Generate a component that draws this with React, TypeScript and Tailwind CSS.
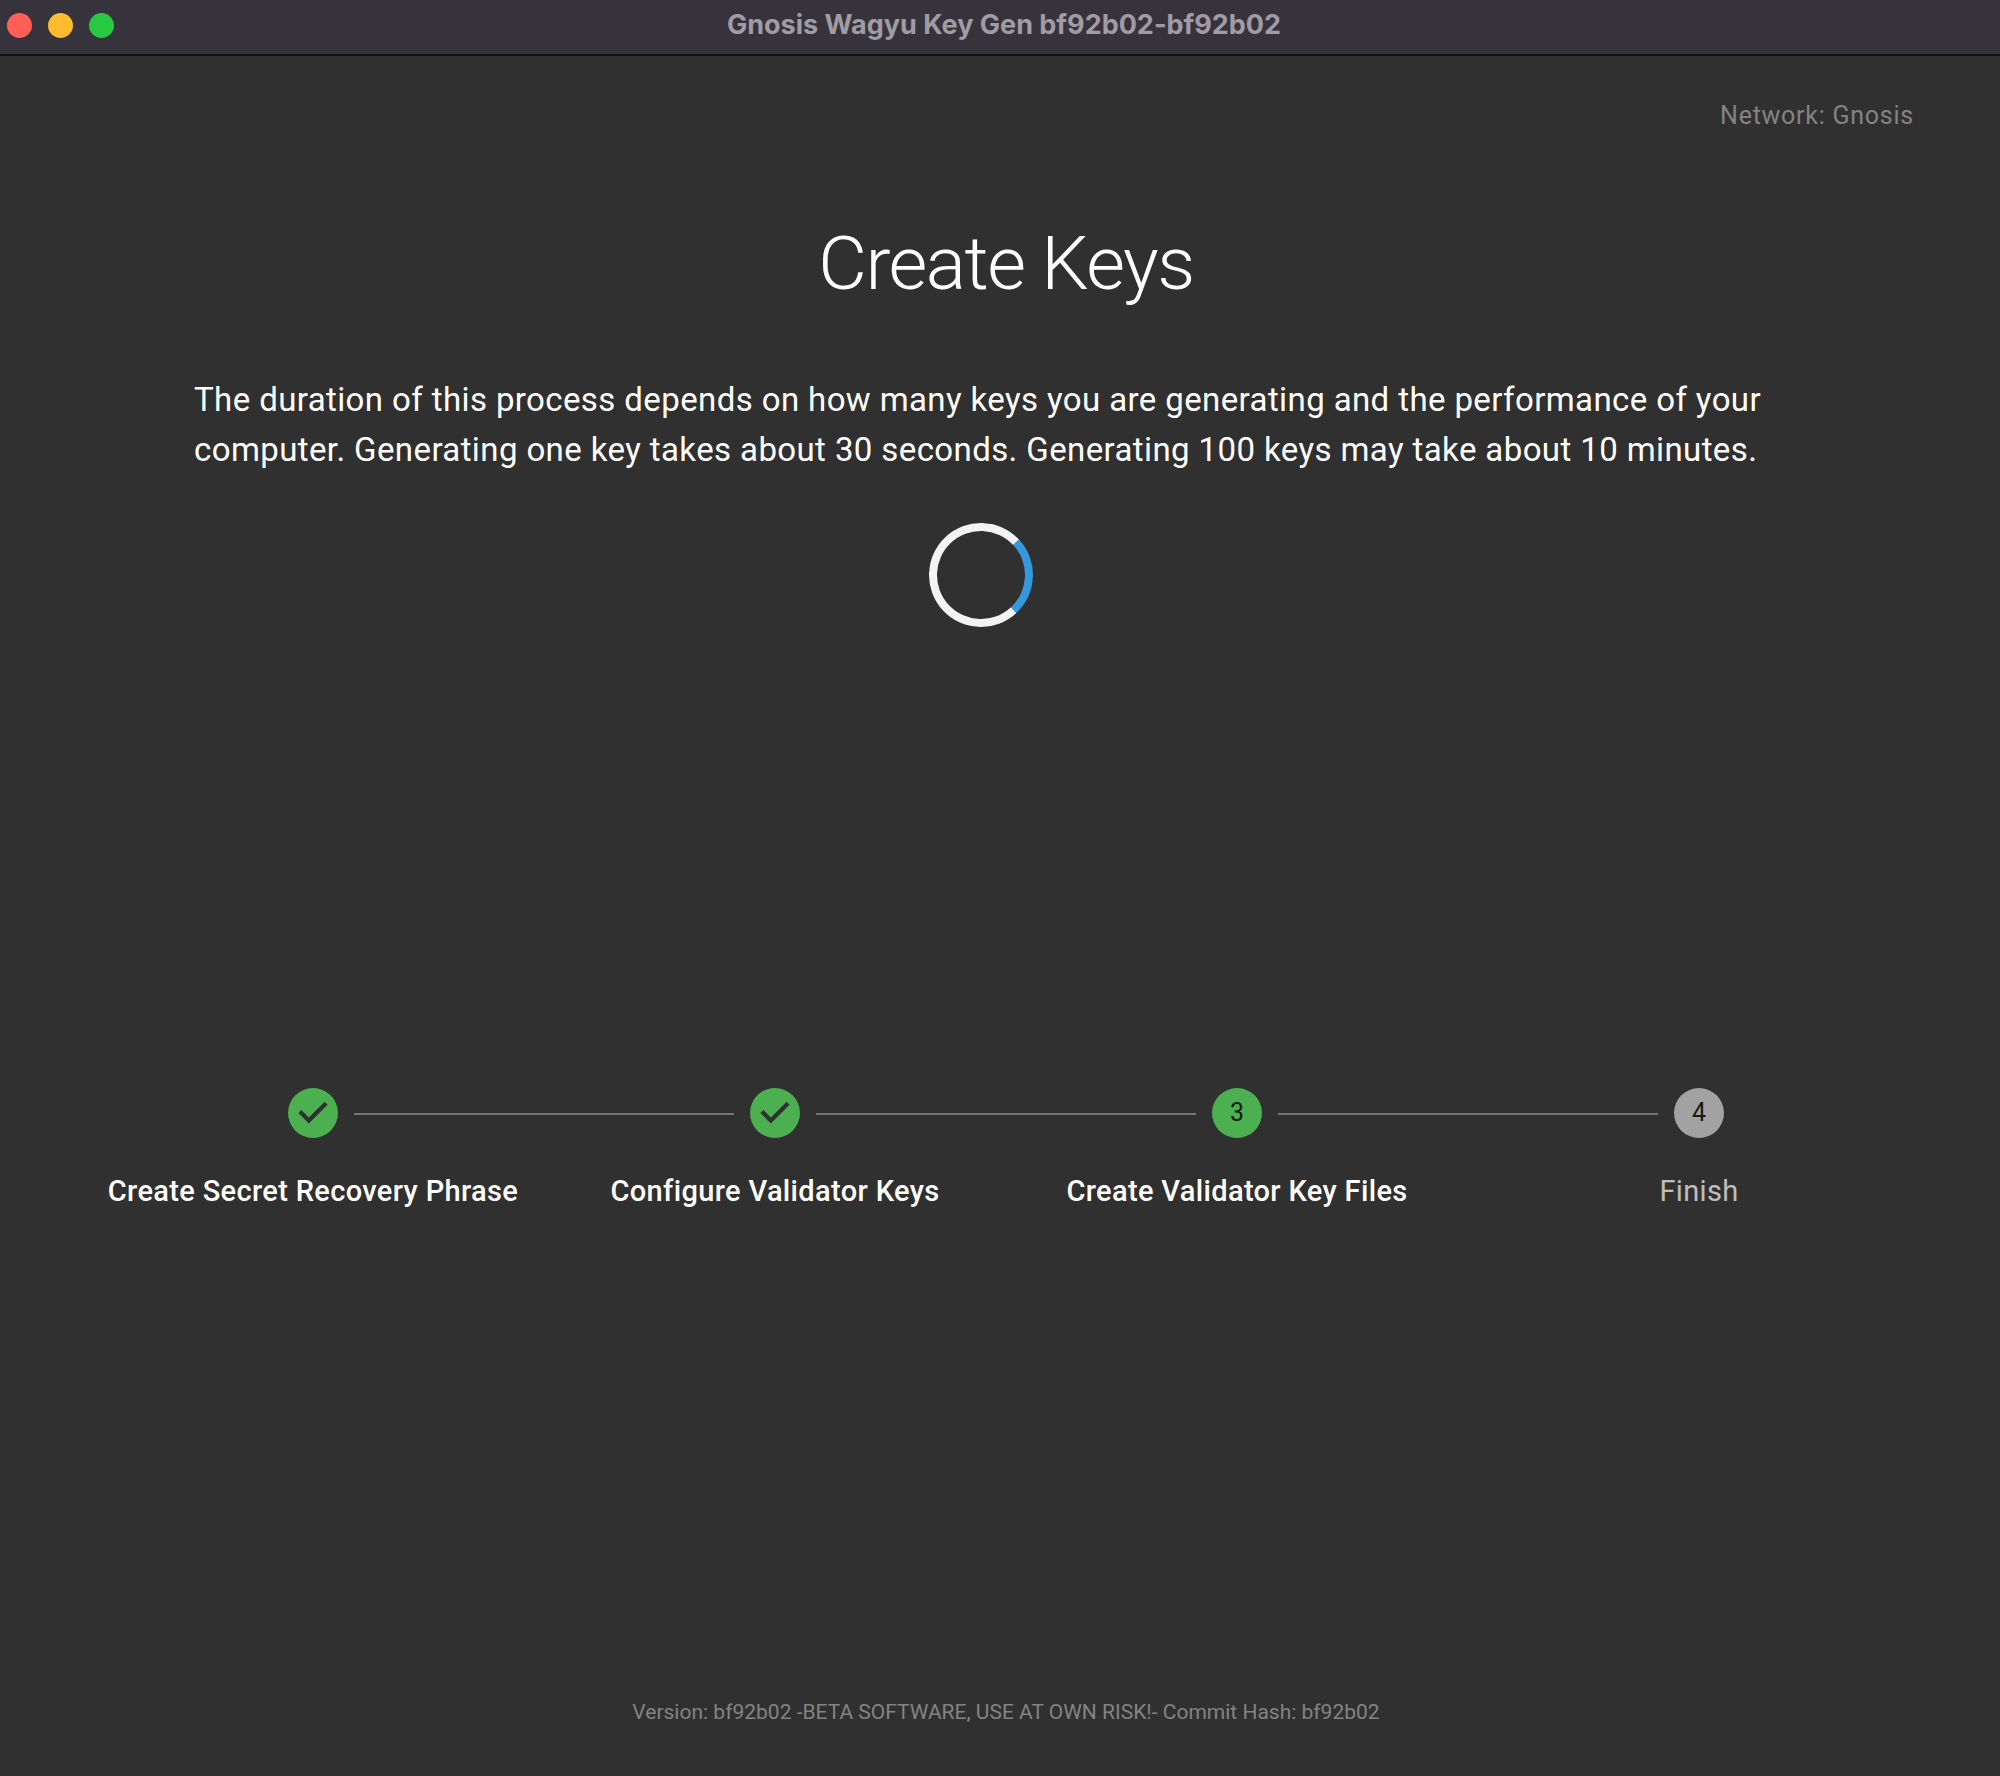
const steps = [
  { label: "Create Secret Recovery Phrase", state: "done" },
  { label: "Configure Validator Keys", state: "done" },
  { label: "Create Validator Key Files", state: "active" },
  { label: "Finish", state: "todo" },
];

function TitleBar() {
  return (
    <header className="grid h-14 grid-cols-[1fr_auto_1fr] items-center border-b-2 border-[#111112] bg-[#37333d] pb-1">
      <div className="flex gap-4 pl-[7px]">
        <button aria-label="Close" className="size-[25px] rounded-full bg-[#ff5f57]" />
        <button aria-label="Minimize" className="size-[25px] rounded-full bg-[#febc2e]" />
        <button aria-label="Zoom" className="size-[25px] rounded-full bg-[#28c840]" />
      </div>
      <h1 className="pl-2 font-['Inter',sans-serif] text-[27px] leading-8 font-bold text-[#a09ca4]">
        Gnosis Wagyu Key Gen bf92b02-bf92b02
      </h1>
    </header>
  );
}

function StepIcon({ state, number }: { state: string; number: number }) {
  if (state === "done") {
    return (
      <svg viewBox="0 0 24 24" className="size-[50px] fill-[#4caf50]" role="img" aria-label="Completed">
        <path d="M12 0a12 12 0 1 0 0 24 12 12 0 0 0 0-24zm-2 17l-5-5 1.4-1.4 3.6 3.6 7.6-7.6L19 8l-9 9z" />
      </svg>
    );
  }
  return (
    <span
      className={`flex size-[50px] items-center justify-center rounded-full text-[25px] leading-8 text-black/87 ${
        state === "active" ? "bg-[#4caf50]" : "bg-[#a2a2a2]"
      }`}
    >
      {number}
    </span>
  );
}

export default function App() {
  return (
    <div className="flex min-h-screen flex-col bg-[#303030] font-['Roboto',sans-serif] text-white">
      <TitleBar />
      <p className="mt-11 pr-[86px] text-right text-[25px] leading-8 tracking-[0.03em] text-[#838383]">
        Network: Gnosis
      </p>
      <main className="flex grow flex-col">
        <h2 className="mt-20 pl-3 text-center text-[75px] leading-[102px] font-light tracking-[-0.02em]">
          Create Keys
        </h2>
        <p className="mt-[61px] px-[194px] text-[33px] leading-[50px] tracking-[0.012em]">
          The duration of this process depends on how many keys you are generating and the performance of your computer.
          Generating one key takes about 30 seconds. Generating 100 keys may take about 10 minutes.
        </p>
        <div role="status" aria-label="Loading" className="mt-12 flex justify-center pr-[38px]">
          <div className="size-[104px] rotate-2 rounded-full border-8 border-[#f3f3f3] border-r-[#3498db]" />
        </div>
        <ol className="mt-[456px] mr-[70px] ml-[82px] grid grid-cols-4">
          {steps.map((s, i) => (
            <li key={s.label} className="relative flex flex-col items-center">
              {i > 0 && (
                <span className="absolute top-[30px] right-[calc(50%+41px)] left-[calc(-50%+41px)] h-0.5 bg-[#757575]" />
              )}
              <div className="flex h-[60px] items-center">
                <StepIcon state={s.state} number={i + 1} />
              </div>
              <span
                className={`mt-7 text-[29px] leading-10 tracking-[0.012em] whitespace-nowrap ${
                  s.state === "todo" ? "text-white/70" : "font-medium"
                }`}
              >
                {s.label}
              </span>
            </li>
          ))}
        </ol>
      </main>
      <footer className="mb-[49px] pl-3 text-center text-[21px] leading-[30px] text-[#838383]">
        Version: bf92b02 -BETA SOFTWARE, USE AT OWN RISK!- Commit Hash: bf92b02
      </footer>
    </div>
  );
}
